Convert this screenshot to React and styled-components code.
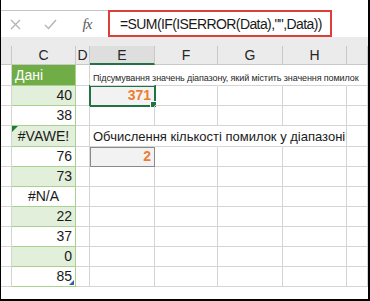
import React from "react";
import styled, { createGlobalStyle } from "styled-components";

const GlobalStyle = createGlobalStyle`
  html, body {
    margin: 0;
    padding: 0;
    background: #ffffff;
  }
  * {
    box-sizing: border-box;
  }
`;

const Frame = styled.div`
  width: 370px;
  height: 301px;
  border-left: 1px solid #000;
  border-right: 2px solid #000;
  border-bottom: 2px solid #000;
  display: flex;
  flex-direction: column;
  overflow: hidden;
  font-family: "Liberation Sans", Arial, sans-serif;
  background: #fff;
`;

const FormulaBar = styled.div`
  margin-top: 10px;
  height: 27px;
  display: flex;
  align-items: stretch;
  background: #fff;
`;

const ToolArea = styled.div`
  width: 107px;
  border-top: 1px solid #c6c6c6;
  display: flex;
  align-items: center;
`;

const ToolIcon = styled.div`
  width: ${(p) => p.$w}px;
  display: flex;
  justify-content: center;
  align-items: center;
`;

const Fx = styled.span`
  font-family: "Liberation Serif", "Times New Roman", serif;
  font-style: italic;
  font-size: 15px;
  color: #5a5a5a;
  letter-spacing: -1px;
`;

const FormulaBox = styled.div`
  width: 224px;
  border: 2px solid #dc3f3a;
  display: flex;
  align-items: center;
  padding-left: 10px;
  font-size: 14px;
  letter-spacing: -0.6px;
  color: #1a1a1a;
  white-space: nowrap;
`;

const Band = styled.div`
  height: 9px;
  background: #ebebeb;
`;

const Sheet = styled.div`
  flex: 1;
  display: grid;
  grid-template-columns: 11px 64px 14px 65px 63px 65px 64px 1fr;
  grid-template-rows: 19px 21px 20px 20px 21px 20px 20px 20px 20px 20px 20px 20px 1fr;
`;

const Head = styled.div`
  background: ${(p) => (p.$active ? "#dedede" : "#ebebeb")};
  border-right: 1px solid #c8c8c8;
  border-bottom: ${(p) => (p.$active ? "2px solid #217346" : "1px solid #c8c8c8")};
  display: flex;
  align-items: center;
  justify-content: center;
  font-size: 14px;
  color: #262626;
`;

const Cell = styled.div`
  position: relative;
  background: ${(p) => p.$bg || "transparent"};
  border-right: 1px solid ${(p) => (p.$noRight ? "transparent" : p.$line || "#d4d4d4")};
  border-bottom: 1px solid ${(p) => p.$line || "#d4d4d4"};
  display: flex;
  align-items: flex-end;
  justify-content: ${(p) => p.$align || "flex-end"};
  padding: 0 3px 2px 3px;
  font-size: ${(p) => p.$size || 14}px;
  letter-spacing: ${(p) => p.$ls || 0}px;
  font-weight: ${(p) => (p.$bold ? 700 : 400)};
  color: ${(p) => p.$color || "#1a1a1a"};
  white-space: nowrap;
  overflow: visible;
  z-index: ${(p) => (p.$top ? 2 : 0)};
`;

const Selected = styled(Cell)`
  outline: 2px solid #217346;
  outline-offset: -1px;
  &::after {
    content: "";
    position: absolute;
    right: -3px;
    bottom: -3px;
    width: 5px;
    height: 5px;
    background: #217346;
    border: 1px solid #fff;
  }
`;

const Boxed = styled(Cell)`
  outline: 1px solid #8a8a8a;
  outline-offset: -1px;
`;

const ErrorMark = styled.span`
  position: absolute;
  left: 0;
  top: 0;
  width: 0;
  height: 0;
  border-top: 6px solid #1e7e34;
  border-right: 6px solid transparent;
`;

const Handle = styled.span`
  position: absolute;
  right: 1px;
  bottom: 1px;
  width: 0;
  height: 0;
  border-bottom: 5px solid #3b5ba5;
  border-left: 5px solid transparent;
`;

const dataC = [
  { v: "40", g: true },
  { v: "38" },
  { v: "#VAWE!", g: true, center: true, err: true },
  { v: "76" },
  { v: "73", g: true },
  { v: "#N/A", center: true },
  { v: "22", g: true },
  { v: "37" },
  { v: "0", g: true },
  { v: "85", handle: true },
];

const headers = ["C", "D", "E", "F", "G", "H", ""];

function App() {
  const rows = [];

  // row 1
  rows.push(
    <React.Fragment key="r1">
      <Cell />
      <Cell $bg="#70ad47" $line="#a9d08e" $align="flex-start" $color="#ffffff">
        Дані
      </Cell>
      <Cell />
      <Cell $align="flex-start" $size={9} $ls={-0.1} $color="#262626" $noRight $top>
        Підсумування значень діапазону, який містить значення помилок
      </Cell>
      <Cell $noRight />
      <Cell $noRight />
      <Cell $noRight />
      <Cell />
    </React.Fragment>
  );

  dataC.forEach((d, i) => {
    const r = i + 2;
    let eCell = <Cell />;
    let fgNoRight = false;
    if (r === 2) {
      eCell = (
        <Selected $bg="#f2f2f2" $bold $color="#ed7d31">
          371
        </Selected>
      );
    } else if (r === 4) {
      eCell = (
        <Cell $align="flex-start" $size={13} $noRight $top>
          Обчислення кількості помилок у діапазоні
        </Cell>
      );
      fgNoRight = true;
    } else if (r === 5) {
      eCell = (
        <Boxed $bg="#f2f2f2" $bold $color="#ed7d31">
          2
        </Boxed>
      );
    }
    rows.push(
      <React.Fragment key={"r" + r}>
        <Cell />
        <Cell
          $bg={d.g ? "#e2efda" : "#ffffff"}
          $line="#a9d08e"
          $align={d.center ? "center" : "flex-end"}
        >
          {d.err && <ErrorMark />}
          {d.v}
          {d.handle && <Handle />}
        </Cell>
        <Cell />
        {eCell}
        <Cell $noRight={fgNoRight} />
        <Cell $noRight={fgNoRight} />
        <Cell />
        <Cell />
      </React.Fragment>
    );
  });

  return (
    <>
      <GlobalStyle />
      <Frame>
        <FormulaBar>
          <ToolArea>
            <ToolIcon $w={28}>
              <svg width="11" height="11" viewBox="0 0 11 11">
                <path d="M1 1L10 10M10 1L1 10" stroke="#b4b4b4" strokeWidth="1.3" fill="none" />
              </svg>
            </ToolIcon>
            <ToolIcon $w={42}>
              <svg width="13" height="11" viewBox="0 0 13 11">
                <path d="M1 6L4.5 9.5L12 1" stroke="#b4b4b4" strokeWidth="1.4" fill="none" />
              </svg>
            </ToolIcon>
            <ToolIcon $w={32}>
              <Fx>fx</Fx>
            </ToolIcon>
          </ToolArea>
          <FormulaBox>=SUM(IF(ISERROR(Data),"",Data))</FormulaBox>
        </FormulaBar>
        <Band />
        <Sheet>
          <Head />
          {headers.map((h) => (
            <Head key={h || "i"} $active={h === "E"}>
              {h}
            </Head>
          ))}
          {rows}
        </Sheet>
      </Frame>
    </>
  );
}

export default App;
